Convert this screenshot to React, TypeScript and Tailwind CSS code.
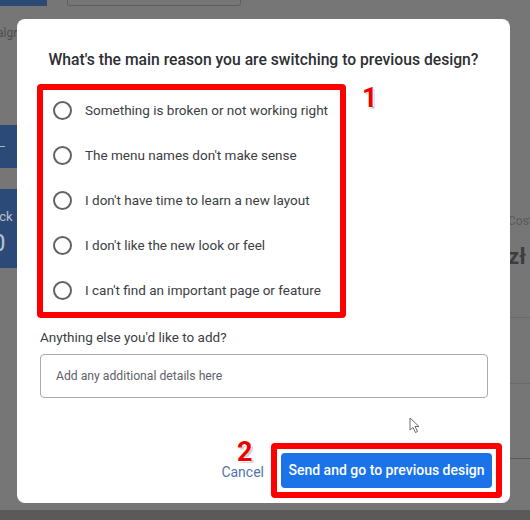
import React from "react";

const reasons = [
  "Something is broken or not working right",
  "The menu names don't make sense",
  "I don't have time to learn a new layout",
  "I don't like the new look or feel",
  "I can't find an important page or feature",
];

function Pointer() {
  return (
    <svg width="12" height="17" viewBox="0 0 12 17" className="absolute left-[409px] top-[417px]">
      <path d="M1 1 L1 13 L4 10.5 L6.5 15.5 L8.5 14.5 L6 9.5 L10 9.5 Z" fill="#ffffff" stroke="#6b6b6b" strokeWidth="1" strokeLinejoin="round" />
    </svg>
  );
}

function Backdrop() {
  return (
    <div className="absolute inset-0 bg-[#767676]">
      <div className="absolute left-0 top-0 w-[47px] h-[6px] bg-[#2c4a73]" />
      <div className="absolute left-[67px] top-[-4px] w-[174px] h-[10px] rounded-[3px] border border-[#5e5e5e]" />
      <div className="absolute left-[-3px] top-[24px] text-[12px] text-[#4e4e4e]">algr</div>
      <div className="absolute left-0 top-[125px] w-[17px] h-[43px] bg-[#2b4a77] flex items-center">
        <div className="w-[5px] h-[1px] bg-[#aab4c4]" />
      </div>
      <div className="absolute left-0 top-[189px] w-[17px] h-[79px] bg-[#2b4a77] overflow-hidden text-[#b9c1cf]">
        <div className="ml-[-4px] mt-[20px] text-[13px] leading-[16px]">ick</div>
        <div className="ml-[-8px] mt-[4px] text-[24px] leading-[28px]">0</div>
      </div>
      <div className="absolute left-[508px] top-[212px] text-[12px] text-[#5a5a5a]">Cost</div>
      <div className="absolute left-[508px] top-[240px] text-[22px] font-bold text-[#3d3d3d]">zł</div>
      <div className="absolute left-[510px] top-[317px] w-[20px] h-px bg-[#6a6a6a]" />
      <div className="absolute left-[510px] top-[383px] w-[20px] h-px bg-[#6a6a6a]" />
      <div className="absolute left-[510px] top-[458px] w-[20px] h-px bg-[#5a5a5a]" />
      <div className="absolute left-0 bottom-0 w-full h-[10px] bg-[#5a5a5a]" />
    </div>
  );
}

function Mark({ n, cls }: { n: string; cls: string }) {
  return (
    <div
      className={`absolute text-[27px] leading-none font-bold text-[#ee0000] ${cls}`}
      style={{ fontFamily: "Roboto, sans-serif", textShadow: "-1px -1px 0 #fff, 1px -1px 0 #fff, -1px 1px 0 #fff, 1px 1px 0 #c9c9c9, 2px 2px 0 #d9d9d9" }}
    >
      {n}
    </div>
  );
}

export default function App() {
  return (
    <div className="relative w-[530px] h-[520px] overflow-hidden" style={{ fontFamily: "Roboto, 'Liberation Sans', sans-serif" }}>
      <Backdrop />
      <div className="absolute left-[17px] top-[19px] w-[493px] h-[484px] bg-white rounded-[8px] flex flex-col pl-[20px] pr-[8px] pt-[29px] pb-[5px]">
        <h2 className="pr-[12px] text-center text-[15.7px] leading-[24px] font-medium text-[#2d2f33]">
          What's the main reason you are switching to previous design?
        </h2>
        <div className="mt-[12px] w-[309px] h-[234px] border-[6px] border-[#ff0000] rounded-[4px] flex flex-col gap-[5px]">
          {reasons.map((r) => (
            <label key={r} className="h-[40px] flex items-center">
              <span className="ml-[10px] w-[19px] h-[19px] rounded-full border-2 border-[#5f6368]" />
              <span className="ml-[13px] text-[13.5px] text-[#3c4043]">{r}</span>
            </label>
          ))}
        </div>
        <div className="mt-[9px] ml-[3px] text-[13.5px] leading-[20px] text-[#3c4043]">Anything else you'd like to add?</div>
        <div className="mt-[7px] ml-[3px] w-[448px] h-[44px] rounded-[4px] border border-[#a8abaf] flex items-center pl-[15px]">
          <span className="text-[12.2px] text-[#5f6368]">Add any additional details here</span>
        </div>
        <div className="mt-auto flex items-center justify-end gap-[7px]">
          <button className="text-[14px] font-normal text-[#4f76aa] mt-[4px]">Cancel</button>
          <div className="border-[6px] border-[#ff0000] rounded-[4px] p-[4px]">
            <button className="w-[211px] h-[35px] rounded-[4px] bg-[#1a73e8] text-white text-[14px] font-medium">
              Send and go to previous design
            </button>
          </div>
        </div>
      </div>
      <Mark n="1" cls="left-[362px] top-[85px]" />
      <Mark n="2" cls="left-[237px] top-[439px]" />
      <Pointer />
    </div>
  );
}
